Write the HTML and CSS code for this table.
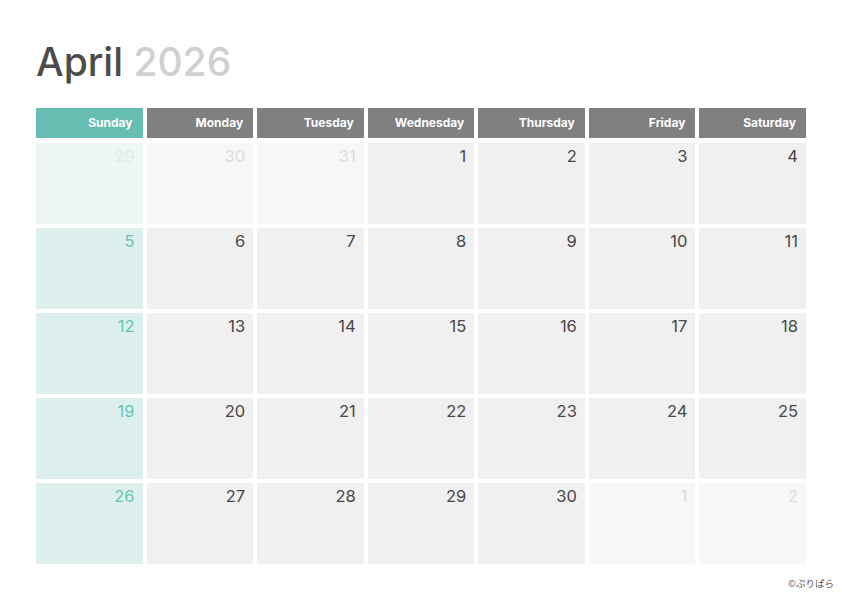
FILE: index.html
```html
<!DOCTYPE html>
<html lang="en">
<head>
<meta charset="utf-8">
<title>April 2026</title>
<link rel="stylesheet" href="styles.css">
</head>
<body>
<div class="page">
  <h1 class="title"><span class="month">April</span> <span class="year">2026</span></h1>
  <div class="cal">
    <div class="hd sun">Sunday</div>
    <div class="hd">Monday</div>
    <div class="hd">Tuesday</div>
    <div class="hd">Wednesday</div>
    <div class="hd">Thursday</div>
    <div class="hd">Friday</div>
    <div class="hd">Saturday</div>

    <div class="cell sun other">29</div>
    <div class="cell other">30</div>
    <div class="cell other">31</div>
    <div class="cell">1</div>
    <div class="cell">2</div>
    <div class="cell">3</div>
    <div class="cell">4</div>

    <div class="cell sun">5</div>
    <div class="cell">6</div>
    <div class="cell">7</div>
    <div class="cell">8</div>
    <div class="cell">9</div>
    <div class="cell">10</div>
    <div class="cell">11</div>

    <div class="cell sun">12</div>
    <div class="cell">13</div>
    <div class="cell">14</div>
    <div class="cell">15</div>
    <div class="cell">16</div>
    <div class="cell">17</div>
    <div class="cell">18</div>

    <div class="cell sun">19</div>
    <div class="cell">20</div>
    <div class="cell">21</div>
    <div class="cell">22</div>
    <div class="cell">23</div>
    <div class="cell">24</div>
    <div class="cell">25</div>

    <div class="cell sun">26</div>
    <div class="cell">27</div>
    <div class="cell">28</div>
    <div class="cell">29</div>
    <div class="cell">30</div>
    <div class="cell other">1</div>
    <div class="cell other">2</div>
  </div>
  <div class="credit">©ぷりぱら</div>
</div>
</body>
</html>
```
FILE: styles.css
```css
html, body {
  margin: 0;
  padding: 0;
  background: #ffffff;
}
body {
  width: 842px;
  height: 595px;
  overflow: hidden;
  font-family: Inter, "Noto Sans", sans-serif;
}
.page {
  padding: 38px 0 0 36px;
  width: 770px;
}
.title {
  margin: 0;
  font-size: 39px;
  line-height: 47px;
  font-weight: 500;
  letter-spacing: 0;
}
.month { color: #4b4b4b; }
.year { color: #d0d0d0; }
.cal {
  margin-top: 23px;
  display: grid;
  grid-template-columns: repeat(7, 1fr);
  grid-template-rows: 31px repeat(5, 81px);
  column-gap: 4px;
  row-gap: 4px;
}
.hd {
  background: #808080;
  color: #ffffff;
  font-weight: 700;
  font-size: 12px;
  line-height: 30px;
  height: 30px;
  text-align: right;
  padding-right: 10px;
}
.hd.sun { background: #66bdb1; }
.cell {
  background: #f0f0f0;
  color: #474747;
  font-size: 16.5px;
  line-height: 20px;
  text-align: right;
  padding: 3px 8px 0 0;
}
.cell.other {
  background: #f7f7f7;
  color: #dcdcdc;
}
.cell.sun {
  background: #def0ed;
  color: #68c3b4;
}
.cell.sun.other {
  background: #eef6f5;
  color: #d8eeea;
}
.credit {
  margin-top: 12px;
  margin-right: -28px;
  text-align: right;
  font-family: "Noto Sans CJK JP", sans-serif;
  font-size: 9.5px;
  color: #555555;
}
```
